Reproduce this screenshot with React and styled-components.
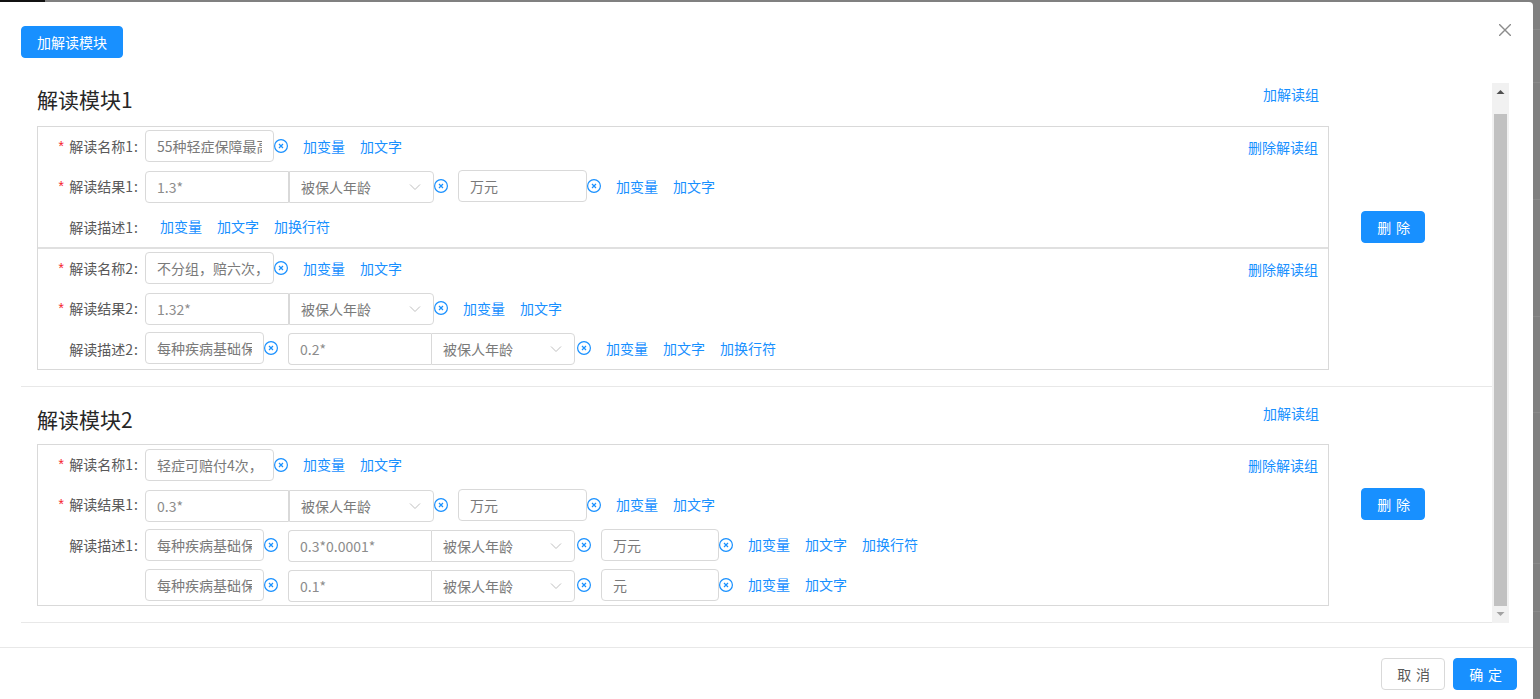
import React from 'react';
import styled, { createGlobalStyle } from 'styled-components';

const GlobalStyle = createGlobalStyle`
  html, body {
    margin: 0;
    padding: 0;
    height: 100%;
    overflow: hidden;
    background: #808080;
  }
  * {
    box-sizing: border-box;
  }
  body, input {
    font-family: "Noto Sans CJK SC", "Liberation Sans", sans-serif;
  }
`;

// rows of the page behind the modal, they only show in the strip on the right
const backdropLines = [29, 82, 199, 316, 412, 563, 611]
  .map((y) => `linear-gradient(#8a8a8a, #8a8a8a) 0 ${y}px / 100% 1px no-repeat`)
  .join(', ');

const Backdrop = styled.div`
  width: 1540px;
  height: 699px;
  padding: 2px 7px 0 0;
  background: ${backdropLines}, #808080;
  position: relative;
  &::before {
    content: '';
    position: absolute;
    top: 0;
    left: 0;
    width: 45px;
    height: 2px;
    background: #111;
  }
`;

const Modal = styled.div`
  width: 1533px;
  height: 697px;
  background: #fff;
  border-radius: 0 4px 0 0;
  display: flex;
  flex-direction: column;
  position: relative;
`;

const CloseIcon = styled.svg`
  position: absolute;
  top: 22px;
  right: 22px;
  width: 12px;
  height: 12px;
  stroke: #8c8c8c;
  stroke-width: 1.4;
`;

const Body = styled.div`
  flex: 1;
  min-height: 0;
  padding: 24px 24px 0 21px;
`;

const Button = styled.button`
  height: 32px;
  padding: ${(p) => (p.$spaced ? '0 0 0 6px' : '0 15px')};
  border-radius: 4px;
  border: 1px solid ${(p) => (p.$ghost ? '#d9d9d9' : '#1890ff')};
  background: ${(p) => (p.$ghost ? '#fff' : '#1890ff')};
  color: ${(p) => (p.$ghost ? '#595959' : '#fff')};
  font-family: inherit;
  font-size: 14px;
  line-height: 1;
  letter-spacing: ${(p) => (p.$spaced ? '4.76px' : '0')};
  width: ${(p) => (p.$spaced ? '64px' : 'auto')};
  white-space: nowrap;
`;

const ScrollArea = styled.div`
  margin-top: 25px;
  height: 540px;
  display: flex;
`;

const Viewport = styled.div`
  flex: 1;
  min-width: 0;
  overflow: hidden;
`;

/* the list is scrolled to its end, so the first 16px of it are cut off */
const ModuleList = styled.div`
  margin-top: -16px;
`;

const Module = styled.section`
  height: ${(p) => p.$height}px;
  padding-left: 16px;
  border-bottom: 1px solid #e8e8e8;
  display: flex;
  align-items: center;
`;

const ModuleMain = styled.div`
  width: 1292px;
  flex-shrink: 0;
  align-self: flex-start;
  padding-top: 18px;
`;

const ModuleHead = styled.div`
  height: ${(p) => p.$height}px;
  display: flex;
  justify-content: space-between;
  align-items: flex-start;
  padding-right: 10px;
`;

const ModuleTitle = styled.h2`
  margin: 0;
  font-size: 21px;
  font-weight: 400;
  line-height: 28px;
  color: #262626;
`;

const HeadLink = styled.a`
  margin-top: ${(p) => p.$top}px;
  font-size: 14px;
  line-height: 18px;
  color: #1890ff;
`;

const ModuleAction = styled.div`
  margin-left: 32px;
  margin-bottom: ${(p) => (p.$raise ? '1px' : '0')};
`;

const GroupBox = styled.div`
  border: 1px solid #d9d9d9;
`;

const Group = styled.div`
  position: relative;
  height: ${(p) => p.$height}px;
  & + & {
    border-top: 2px solid #e0e0e0;
  }
`;

const GroupRemove = styled.a`
  position: absolute;
  top: 11px;
  right: 10px;
  font-size: 14px;
  line-height: 18px;
  color: #1890ff;
`;

const Row = styled.div`
  height: ${(p) => p.$height}px;
  display: flex;
  align-items: center;
`;

const Label = styled.label`
  width: 107px;
  flex-shrink: 0;
  margin-top: ${(p) => (p.$even ? '0' : '2px')};
  text-align: right;
  font-size: 14px;
  line-height: 18px;
  color: #595959;
  white-space: nowrap;
  &:not(:empty)::after {
    content: ':';
    margin: 0 7px 0 1px;
  }
`;

const Required = styled.span`
  color: #f5222d;
  margin-right: 4px;
  font-family: "Liberation Mono", monospace;
`;

const Fields = styled.div`
  display: flex;
  align-items: center;
  gap: 10px;
`;

const Field = styled.div`
  display: flex;
  align-items: center;
`;

const TextInput = styled.input`
  width: ${(p) => p.$width}px;
  height: 32px;
  padding: 0 11px;
  border: 1px solid #d9d9d9;
  border-radius: 4px;
  background: #fff;
  font-size: 14px;
  color: #7a7a7a;
  outline: none;
`;

const Compound = styled.div`
  display: flex;
  width: ${(p) => p.$width}px;
  height: 32px;
  margin-top: 2px;
  margin-right: ${(p) => (p.$narrow ? '2px' : '0')};
`;

const CompoundInput = styled(TextInput)`
  flex: 1;
  width: auto;
  min-width: 0;
  border-radius: 4px 0 0 4px;
  border-right: ${(p) => (p.$seam ? '1px solid #d9d9d9' : '0')};
  color: #8c8c8c;
`;

const Select = styled.div`
  width: ${(p) => p.$width}px;
  flex-shrink: 0;
  display: flex;
  align-items: center;
  justify-content: space-between;
  padding: 0 12px 0 11px;
  border: 1px solid #d9d9d9;
  border-radius: 0 4px 4px 0;
  font-size: 14px;
  color: #7a7a7a;
`;

const Chevron = styled.svg`
  width: 12px;
  height: 12px;
  fill: none;
  stroke: #bfbfbf;
  stroke-width: 1;
`;

const ClearIcon = styled.svg`
  width: 14px;
  height: 14px;
  flex-shrink: 0;
  fill: none;
  stroke: #1890ff;
`;

const Links = styled.div`
  display: flex;
  gap: 15px;
  padding-left: 15px;
  margin-bottom: ${(p) => (p.$even ? '2px' : '0')};
`;

const TextLink = styled.a`
  font-size: 14px;
  line-height: 18px;
  color: #1890ff;
  white-space: nowrap;
`;

const ScrollTrack = styled.div`
  width: 17px;
  flex-shrink: 0;
  background: #f1f1f1;
  display: flex;
  flex-direction: column;
  align-items: center;
  padding: 0 2px;
`;

const ScrollArrow = styled.svg`
  width: 9px;
  height: 17px;
  flex-shrink: 0;
  fill: ${(p) => p.$color};
`;

const ScrollGap = styled.div`
  height: 14px;
  flex-shrink: 0;
`;

const ScrollThumb = styled.div`
  flex: 1;
  width: 100%;
  background: #c1c1c1;
`;

const Footer = styled.footer`
  height: 52px;
  border-top: 1px solid #e8e8e8;
  display: flex;
  justify-content: flex-end;
  align-items: flex-start;
  gap: 8px;
  padding: 10px 16px 0 0;
`;

const Clear = () => (
  <ClearIcon viewBox="0 0 14 14">
    <circle cx="7" cy="7" r="6.4" strokeWidth="1.2" />
    <path d="M5 5l4 4M9 5l-4 4" strokeWidth="1.2" />
  </ClearIcon>
);

const Text = ({ width, value }) => (
  <Field>
    <TextInput $width={width} value={value} readOnly />
    <Clear />
  </Field>
);

const Formula = ({ narrow, value }) => (
  <Field>
    <Compound $width={narrow ? 287 : 289} $narrow={narrow}>
      <CompoundInput $seam={!narrow} value={value} readOnly />
      <Select $width={narrow ? 144 : 145}>
        被保人年龄
        <Chevron viewBox="0 0 12 12">
          <path d="M1 3.5l5 5 5-5" />
        </Chevron>
      </Select>
    </Compound>
    <Clear />
  </Field>
);

// rows without a height of their own are 40px, their text sits a little higher
const FormRow = ({ label, required, height, children, links }) => (
  <Row $height={height || 40}>
    <Label $even={!height}>
      {required && <Required>*</Required>}
      {label}
    </Label>
    {children && <Fields>{children}</Fields>}
    <Links $even={!height}>
      {links.map((l) => (
        <TextLink key={l}>{l}</TextLink>
      ))}
    </Links>
  </Row>
);

const two = ['加变量', '加文字'];
const three = ['加变量', '加文字', '加换行符'];

const App = () => (
  <>
    <GlobalStyle />
    <Backdrop>
      <Modal>
        <CloseIcon viewBox="0 0 12 12">
          <path d="M0 0l12 12M12 0L0 12" />
        </CloseIcon>
        <Body>
          <Button>加解读模块</Button>
          <ScrollArea>
            <Viewport>
              <ModuleList>
                <Module $height={320}>
                  <ModuleMain>
                    <ModuleHead $height={41}>
                      <ModuleTitle>解读模块1</ModuleTitle>
                      <HeadLink $top={0}>加解读组</HeadLink>
                    </ModuleHead>
                    <GroupBox>
                      <Group $height={120}>
                        <GroupRemove>删除解读组</GroupRemove>
                        <FormRow label="解读名称1" required height={38} links={two}>
                          <Text width={129} value="55种轻症保障最高" />
                        </FormRow>
                        <FormRow label="解读结果1" required height={42} links={two}>
                          <Formula value="1.3*" />
                          <Text width={129} value="万元" />
                        </FormRow>
                        <FormRow label="解读描述1" height={38} links={three} />
                      </Group>
                      <Group $height={122}>
                        <GroupRemove>删除解读组</GroupRemove>
                        <FormRow label="解读名称2" required height={38} links={two}>
                          <Text width={129} value="不分组，赔六次，" />
                        </FormRow>
                        <FormRow label="解读结果2" required height={42} links={two}>
                          <Formula value="1.32*" />
                        </FormRow>
                        <FormRow label="解读描述2" height={38} links={three}>
                          <Text width={119} value="每种疾病基础保额" />
                          <Formula narrow value="0.2*" />
                        </FormRow>
                      </Group>
                    </GroupBox>
                  </ModuleMain>
                  <ModuleAction>
                    <Button $spaced>删除</Button>
                  </ModuleAction>
                </Module>
                <Module $height={236}>
                  <ModuleMain>
                    <ModuleHead $height={39}>
                      <ModuleTitle>解读模块2</ModuleTitle>
                      <HeadLink $top={-1}>加解读组</HeadLink>
                    </ModuleHead>
                    <GroupBox>
                      <Group $height={160}>
                        <GroupRemove>删除解读组</GroupRemove>
                        <FormRow label="解读名称1" required links={two}>
                          <Text width={129} value="轻症可赔付4次，" />
                        </FormRow>
                        <FormRow label="解读结果1" required links={two}>
                          <Formula value="0.3*" />
                          <Text width={129} value="万元" />
                        </FormRow>
                        <FormRow label="解读描述1" links={three}>
                          <Text width={119} value="每种疾病基础保额" />
                          <Formula narrow value="0.3*0.0001*" />
                          <Text width={118} value="万元" />
                        </FormRow>
                        <FormRow label="" links={two}>
                          <Text width={119} value="每种疾病基础保额" />
                          <Formula narrow value="0.1*" />
                          <Text width={118} value="元" />
                        </FormRow>
                      </Group>
                    </GroupBox>
                  </ModuleMain>
                  <ModuleAction $raise>
                    <Button $spaced>删除</Button>
                  </ModuleAction>
                </Module>
              </ModuleList>
            </Viewport>
            <ScrollTrack>
              <ScrollArrow viewBox="0 0 9 17" $color="#505050">
                <path d="M0.5 11L4.5 7l4 4z" />
              </ScrollArrow>
              <ScrollGap />
              <ScrollThumb />
              <ScrollArrow viewBox="0 0 9 17" $color="#a3a3a3">
                <path d="M0.5 6l4 4 4-4z" />
              </ScrollArrow>
            </ScrollTrack>
          </ScrollArea>
        </Body>
        <Footer>
          <Button $ghost $spaced>取消</Button>
          <Button $spaced>确定</Button>
        </Footer>
      </Modal>
    </Backdrop>
  </>
);

export default App;
